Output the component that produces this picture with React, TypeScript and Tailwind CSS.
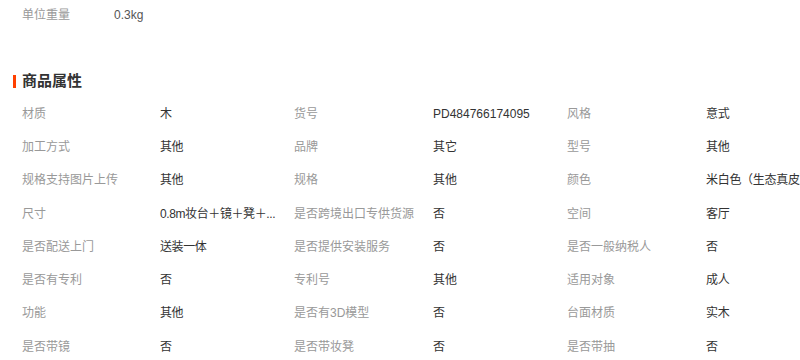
const rows: [string, string, string, string, string, string][] = [
    ['材质', '木', '货号', 'PD484766174095', '风格', '意式'],
    ['加工方式', '其他', '品牌', '其它', '型号', '其他'],
    ['规格支持图片上传', '其他', '规格', '其他', '颜色', '米白色（生态真皮）'],
    ['尺寸', '0.8m妆台＋镜＋凳＋...', '是否跨境出口专供货源', '否', '空间', '客厅'],
    ['是否配送上门', '送装一体', '是否提供安装服务', '否', '是否一般纳税人', '否'],
    ['是否有专利', '否', '专利号', '其他', '适用对象', '成人'],
    ['功能', '其他', '是否有3D模型', '否', '台面材质', '实木'],
    ['是否带镜', '否', '是否带妆凳', '否', '是否带抽', '否'],
];

export default function App() {
    return (
        <div className="w-[800px] h-[360px] overflow-hidden bg-white text-xs" style={{ fontFamily: '"Liberation Sans", "Noto Sans CJK SC", sans-serif' }}>
            <div className="h-[30px] flex items-center pl-[22px]">
                <span className="w-[92px] text-[#999]">单位重量</span>
                <span className="text-[#555]">0.3kg</span>
            </div>
            <div className="mt-[40px] h-[22px] flex items-center pl-[13px]">
                <span className="w-[3px] h-[13px] bg-[#ff4000] mr-[6px]"></span>
                <h2 className="text-[15px] font-bold text-[#333]">商品属性</h2>
            </div>
            <div className="mt-[5px] pl-[22px]">
                {rows.map((r, i) => (
                    <div key={i} className="h-[33.3px] grid grid-cols-[138px_134px_139px_134px_139px_1fr] items-center whitespace-nowrap">
                        <span className="text-[#999]">{r[0]}</span>
                        <span className="text-[#333] tracking-[-0.4px]">{r[1]}</span>
                        <span className="text-[#999]">{r[2]}</span>
                        <span className="text-[#333]">{r[3]}</span>
                        <span className="text-[#999]">{r[4]}</span>
                        <span className="text-[#333] tracking-[-0.3px]">{r[5]}</span>
                    </div>
                ))}
            </div>
        </div>
    );
}
